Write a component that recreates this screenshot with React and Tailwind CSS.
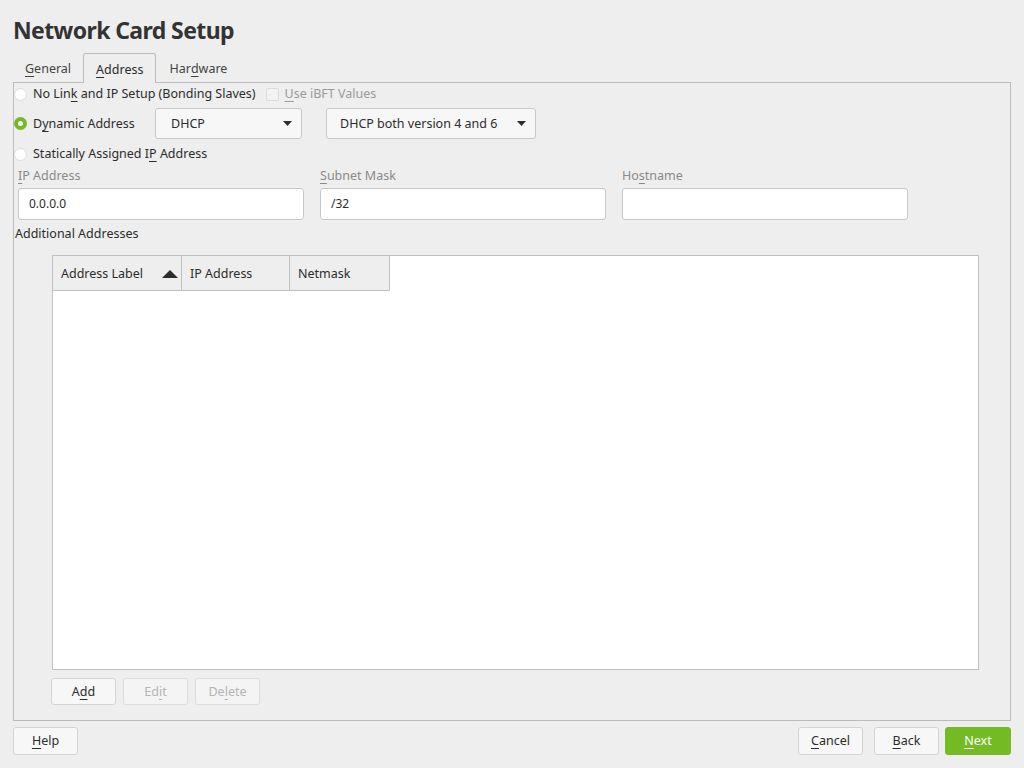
import React from 'react';

const font = { fontFamily: '"Noto Sans", "Open Sans", sans-serif' };

// Underlined mnemonic letter
const U = ({ children }) => <span className="underline underline-offset-[3px] decoration-1">{children}</span>;

const Radio = ({ checked }) =>
  checked ? (
    <span className="w-[13px] h-[13px] rounded-full bg-[#73ba25] flex items-center justify-center shrink-0">
      <span className="w-[5px] h-[5px] rounded-full bg-white" />
    </span>
  ) : (
    <span className="w-[13px] h-[13px] rounded-full bg-white border border-[#dcdcdc] shrink-0" />
  );

const Caret = () => (
  <svg width="9" height="5" viewBox="0 0 9 5" className="shrink-0">
    <path d="M0 0h9L4.5 5z" fill="#2c2c2c" />
  </svg>
);

const Select = ({ value, className = '' }) => (
  <div className={`h-[31px] bg-[#f7f7f7] border border-[#c8c8c8] rounded-[3px] flex items-center justify-between ${className}`}>
    <span className="pt-px">{value}</span>
    <Caret />
  </div>
);

const Field = ({ label, value }) => (
  <div className="w-[286px] flex flex-col">
    <div className="h-[20px] flex items-center text-[#8a8a8a]">{label}</div>
    <div className="mt-[2px] h-[32px] bg-white border border-[#c8c8c8] rounded-[3px] flex items-center px-[10px] text-[12px]">
      {value}
    </div>
  </div>
);

const Button = ({ children, disabled, primary, className = '' }) => {
  const tone = primary
    ? 'bg-[#73ba25] border-[#73ba25] text-white'
    : disabled
    ? 'bg-[#f4f4f4] border-[#dcdcdc] text-[#b4b4b4]'
    : 'bg-[#f7f7f7] border-[#d4d4d4] text-[#2c2c2c]';
  return (
    <div className={`flex items-center justify-center pt-px border rounded-[3px] ${tone} ${className}`}>
      {children}
    </div>
  );
};

export default function App() {
  return (
    <div
      className="w-[1024px] h-[768px] bg-[#eeeeee] text-[#2c2c2c] text-[12.5px] flex flex-col px-[13px] overflow-hidden"
      style={font}
    >
      {/* Title */}
      <div className="h-[53px] pt-[14px]">
        <h1 className="text-[23px] leading-[32px] font-bold tracking-[-0.6px] text-[#333]">Network Card Setup</h1>
      </div>

      {/* Tabs */}
      <div className="h-[29px] flex items-stretch">
        <div className="px-[12px] pt-[3px] flex items-center text-[#444]"><U>G</U>eneral</div>
        <div className="px-[12px] pt-[3px] flex items-center bg-[#eeeeee] border border-b-0 border-[#bcbcbc] rounded-t-[3px] -mb-px relative z-10">
          <U>A</U>ddress
        </div>
        <div className="px-[13px] pt-[3px] flex items-center text-[#444]">Har<U>d</U>ware</div>
      </div>

      {/* Tab panel */}
      <div className="h-[639px] border border-[#bcbcbc] flex flex-col">
        <div className="mt-[1px] h-[20px] flex items-center">
          <Radio />
          <span className="ml-[6px]">No Lin<U>k</U> and IP Setup (Bonding Slaves)</span>
          <span className="ml-[10px] w-[13px] h-[13px] rounded-[2px] border border-[#dcdcdc] bg-[#f2f2f2]" />
          <span className="ml-[6px] text-[#9a9a9a]"><U>U</U>se iBFT Values</span>
        </div>

        <div className="mt-[4px] h-[31px] flex items-center">
          <Radio checked />
          <span className="ml-[6px] w-[122px] pt-px">D<U>y</U>namic Address</span>
          <Select value="DHCP" className="w-[147px] pl-[15px] pr-[9px]" />
          <Select value="DHCP both version 4 and 6" className="ml-[24px] w-[210px] pl-[13px] pr-[9px]" />
        </div>

        <div className="mt-[5px] h-[20px] flex items-center">
          <Radio />
          <span className="ml-[6px]">Statically Assigned I<U>P</U> Address</span>
        </div>

        <div className="mt-[2px] ml-[4px] flex gap-[16px]">
          <Field label={<><U>I</U>P Address</>} value="0.0.0.0" />
          <Field label={<><U>S</U>ubnet Mask</>} value="/32" />
          <Field label={<>Ho<U>s</U>tname</>} value="" />
        </div>

        <div className="mt-[4px] ml-[1px] h-[20px] flex items-center">Additional Addresses</div>

        {/* Table */}
        <div className="mt-[11px] ml-[38px] mr-[31px] flex-1 bg-white border border-[#c0c0c0]">
          <div className="flex h-[35px]">
            <div className="w-[129px] bg-[#eeeeee] border-r border-b border-[#c0c0c0] flex items-center justify-between pl-[8px] pr-[3px] pt-[2px]">
              <span>Address Label</span>
              <svg width="16" height="8" viewBox="0 0 16 8">
                <path d="M0 8L8 0l8 8z" fill="#2c2c2c" />
              </svg>
            </div>
            <div className="w-[108px] bg-[#eeeeee] border-r border-b border-[#c0c0c0] flex items-center pl-[8px] pt-[2px]">IP Address</div>
            <div className="w-[100px] bg-[#eeeeee] border-r border-b border-[#c0c0c0] flex items-center pl-[8px] pt-[2px]">Netmask</div>
          </div>
        </div>

        <div className="mt-[8px] mb-[15px] ml-[37px] h-[27px] flex gap-[7px]">
          <Button className="w-[65px]">A<U>d</U>d</Button>
          <Button disabled className="w-[65px]">Ed<U>i</U>t</Button>
          <Button disabled className="w-[65px]">De<U>l</U>ete</Button>
        </div>
      </div>

      {/* Bottom bar */}
      <div className="mt-[6px] h-[28px] flex">
        <Button className="w-[65px]"><U>H</U>elp</Button>
        <div className="flex-1" />
        <Button className="w-[65px]"><U>C</U>ancel</Button>
        <Button className="w-[65px] ml-[11px]"><U>B</U>ack</Button>
        <Button primary className="w-[66px] ml-[6px]"><U>N</U>ext</Button>
      </div>
    </div>
  );
}
